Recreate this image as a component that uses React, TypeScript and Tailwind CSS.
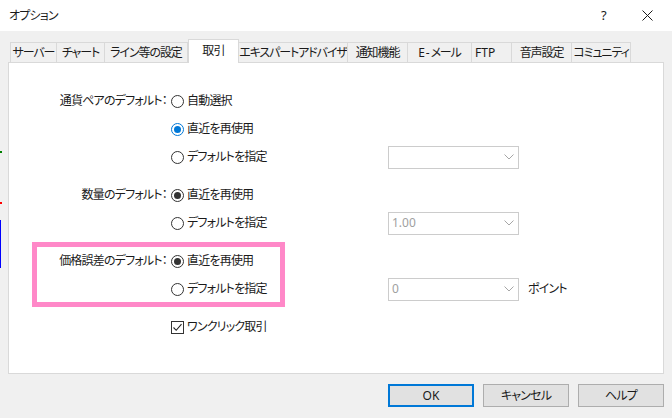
import React from "react";

const font = { fontFamily: '"Noto Sans", "Noto Sans CJK JP", sans-serif' };

type RadioKind = "off" | "blue" | "dark";

const Radio: React.FC<{ kind: RadioKind }> = ({ kind }) => {
  const ring =
    kind === "blue" ? "border-[#0078d7]" : "border-[#333333]";
  return (
    <span
      className={`flex h-[13px] w-[13px] shrink-0 items-center justify-center rounded-full border bg-white ${ring}`}
    >
      {kind === "blue" && (
        <span className="h-[7px] w-[7px] rounded-full bg-[#0078d7]" />
      )}
      {kind === "dark" && (
        <span className="h-[7px] w-[7px] rounded-full bg-[#333333]" />
      )}
    </span>
  );
};

const Chevron = () => (
  <svg width="10" height="6" viewBox="0 0 10 6" className="shrink-0">
    <path d="M0.5 0.5 L5 5 L9.5 0.5" fill="none" stroke="#a6a6a6" strokeWidth="1" />
  </svg>
);

const Select: React.FC<{ value?: string }> = ({ value }) => (
  <div className="flex h-[23px] w-[131px] items-center justify-between border border-[#cccccc] bg-white pl-[3px] pr-[4px]">
    <span className="text-[12px] tracking-normal text-[#a0a0a0]">{value ?? ""}</span>
    <Chevron />
  </div>
);

interface RowProps {
  label?: string;
  radio?: RadioKind;
  text: string;
  select?: string;
  suffix?: string;
}

const Row: React.FC<RowProps> = ({ label, radio, text, select, suffix }) => (
  <div className="flex h-[28px] items-center whitespace-nowrap">
    <div className="w-[158px] shrink-0 text-right text-[12px] text-[#1a1a1a]">
      {label ?? ""}
    </div>
    <div className="ml-[4px] flex w-[217px] shrink-0 items-center">
      {radio ? (
        <Radio kind={radio} />
      ) : (
        <span className="flex h-[13px] w-[13px] shrink-0 items-center justify-center border border-[#333333] bg-white">
          <svg width="11" height="11" viewBox="0 0 11 11">
            <path d="M1.5 5.5 L4.2 8.3 L9.5 2.2" fill="none" stroke="#222" strokeWidth="1.1" />
          </svg>
        </span>
      )}
      <span className="ml-[3px] text-[12px] text-[#1a1a1a]">{text}</span>
    </div>
    {select !== undefined && <Select value={select} />}
    {suffix && (
      <span className="ml-[9px] text-[12px] text-[#1a1a1a]">{suffix}</span>
    )}
  </div>
);

const tabs = [
  { name: "サーバー", w: 47 },
  { name: "チャート", w: 48 },
  { name: "ライン等の設定", w: 83 },
  { name: "取引", w: 51, active: true },
  { name: "エキスパートアドバイザ", w: 109 },
  { name: "通知機能", w: 60 },
  { name: "E - メール", w: 64 },
  { name: "FTP", w: 40, left: true },
  { name: "音声設定", w: 60 },
  { name: "コミュニティ", w: 59 },
];

export default function App() {
  return (
    <div
      className="relative flex h-[418px] w-[672px] flex-col overflow-hidden bg-[#f0f0f0] tracking-[-0.8px] text-[#1a1a1a] [font-feature-settings:'palt']"
      style={font}
    >
      {/* title bar */}
      <div className="flex h-[31px] shrink-0 items-center bg-white pr-[4px]">
        <span className="pl-[9px] text-[12px]">オプション</span>
        <div className="ml-auto flex items-center">
          <span className="w-[45px] text-center text-[13px]">?</span>
          <span className="flex w-[42px] justify-center">
            <svg width="11" height="11" viewBox="0 0 11 11">
              <path d="M0.5 0.5 L10.5 10.5 M10.5 0.5 L0.5 10.5" stroke="#1a1a1a" strokeWidth="1" />
            </svg>
          </span>
        </div>
      </div>

      {/* tabs */}
      <div className="mt-[8px] flex h-[23px] items-end whitespace-nowrap pl-[10px]">
        {tabs.map((t) =>
          t.active ? (
            <div
              key={t.name}
              className="relative z-10 -mb-px flex h-[24px] items-start justify-center border border-b-0 border-[#d9d9d9] bg-white pt-[2px] text-[12px]"
              style={{ width: t.w }}
            >
              {t.name}
            </div>
          ) : (
            <div
              key={t.name}
              className={`flex h-[20px] items-center overflow-hidden border border-l-0 border-b-0 border-[#d9d9d9] bg-[#f0f0f0] text-[12px] first:border-l ${
                t.left
                  ? "justify-start pl-[3px] tracking-normal"
                  : "justify-center tracking-[-1.1px]"
              }`}
              style={{ width: t.w }}
            >
              {t.name}
            </div>
          )
        )}
      </div>

      {/* panel */}
      <div className="relative mx-[8px] h-[312px] border border-[#d9d9d9] bg-white pt-[24px]">
        <Row label="通貨ペアのデフォルト：" radio="off" text="自動選択" />
        <Row radio="blue" text="直近を再使用" />
        <Row radio="off" text="デフォルトを指定" select="" />
        <div className="h-[10px]" />
        <Row label="数量のデフォルト：" radio="dark" text="直近を再使用" />
        <Row radio="off" text="デフォルトを指定" select="1.00" />
        <div className="h-[10px]" />
        <Row label="価格誤差のデフォルト：" radio="dark" text="直近を再使用" />
        <Row radio="off" text="デフォルトを指定" select="0" suffix="ポイント" />
        <div className="h-[10px]" />
        <Row text="ワンクリック取引" />

        {/* highlight annotation */}
        <div className="pointer-events-none absolute left-[23px] top-[179px] h-[65px] w-[253px] border-[5px] border-[#ff88c8]" />
      </div>

      {/* buttons */}
      <div className="mt-[10px] flex justify-end gap-[9px] pr-[8px]">
        <button className="h-[23px] w-[86px] border-2 border-[#0078d7] bg-[#e1e1e1] text-[12px] tracking-normal">
          OK
        </button>
        <button className="h-[23px] w-[86px] border border-[#adadad] bg-[#e1e1e1] text-[12px]">
          キャンセル
        </button>
        <button className="h-[23px] w-[86px] border border-[#adadad] bg-[#e1e1e1] text-[12px]">
          ヘルプ
        </button>
      </div>

      {/* bits of the window behind */}
      <div className="absolute left-0 top-[220px] h-[48px] w-px bg-[#0000ff]" />
      <div className="absolute left-0 top-[202px] h-[2px] w-[2px] bg-[#ff0000]" />
      <div className="absolute left-0 top-[151px] h-[2px] w-[2px] bg-[#008000]" />
    </div>
  );
}
